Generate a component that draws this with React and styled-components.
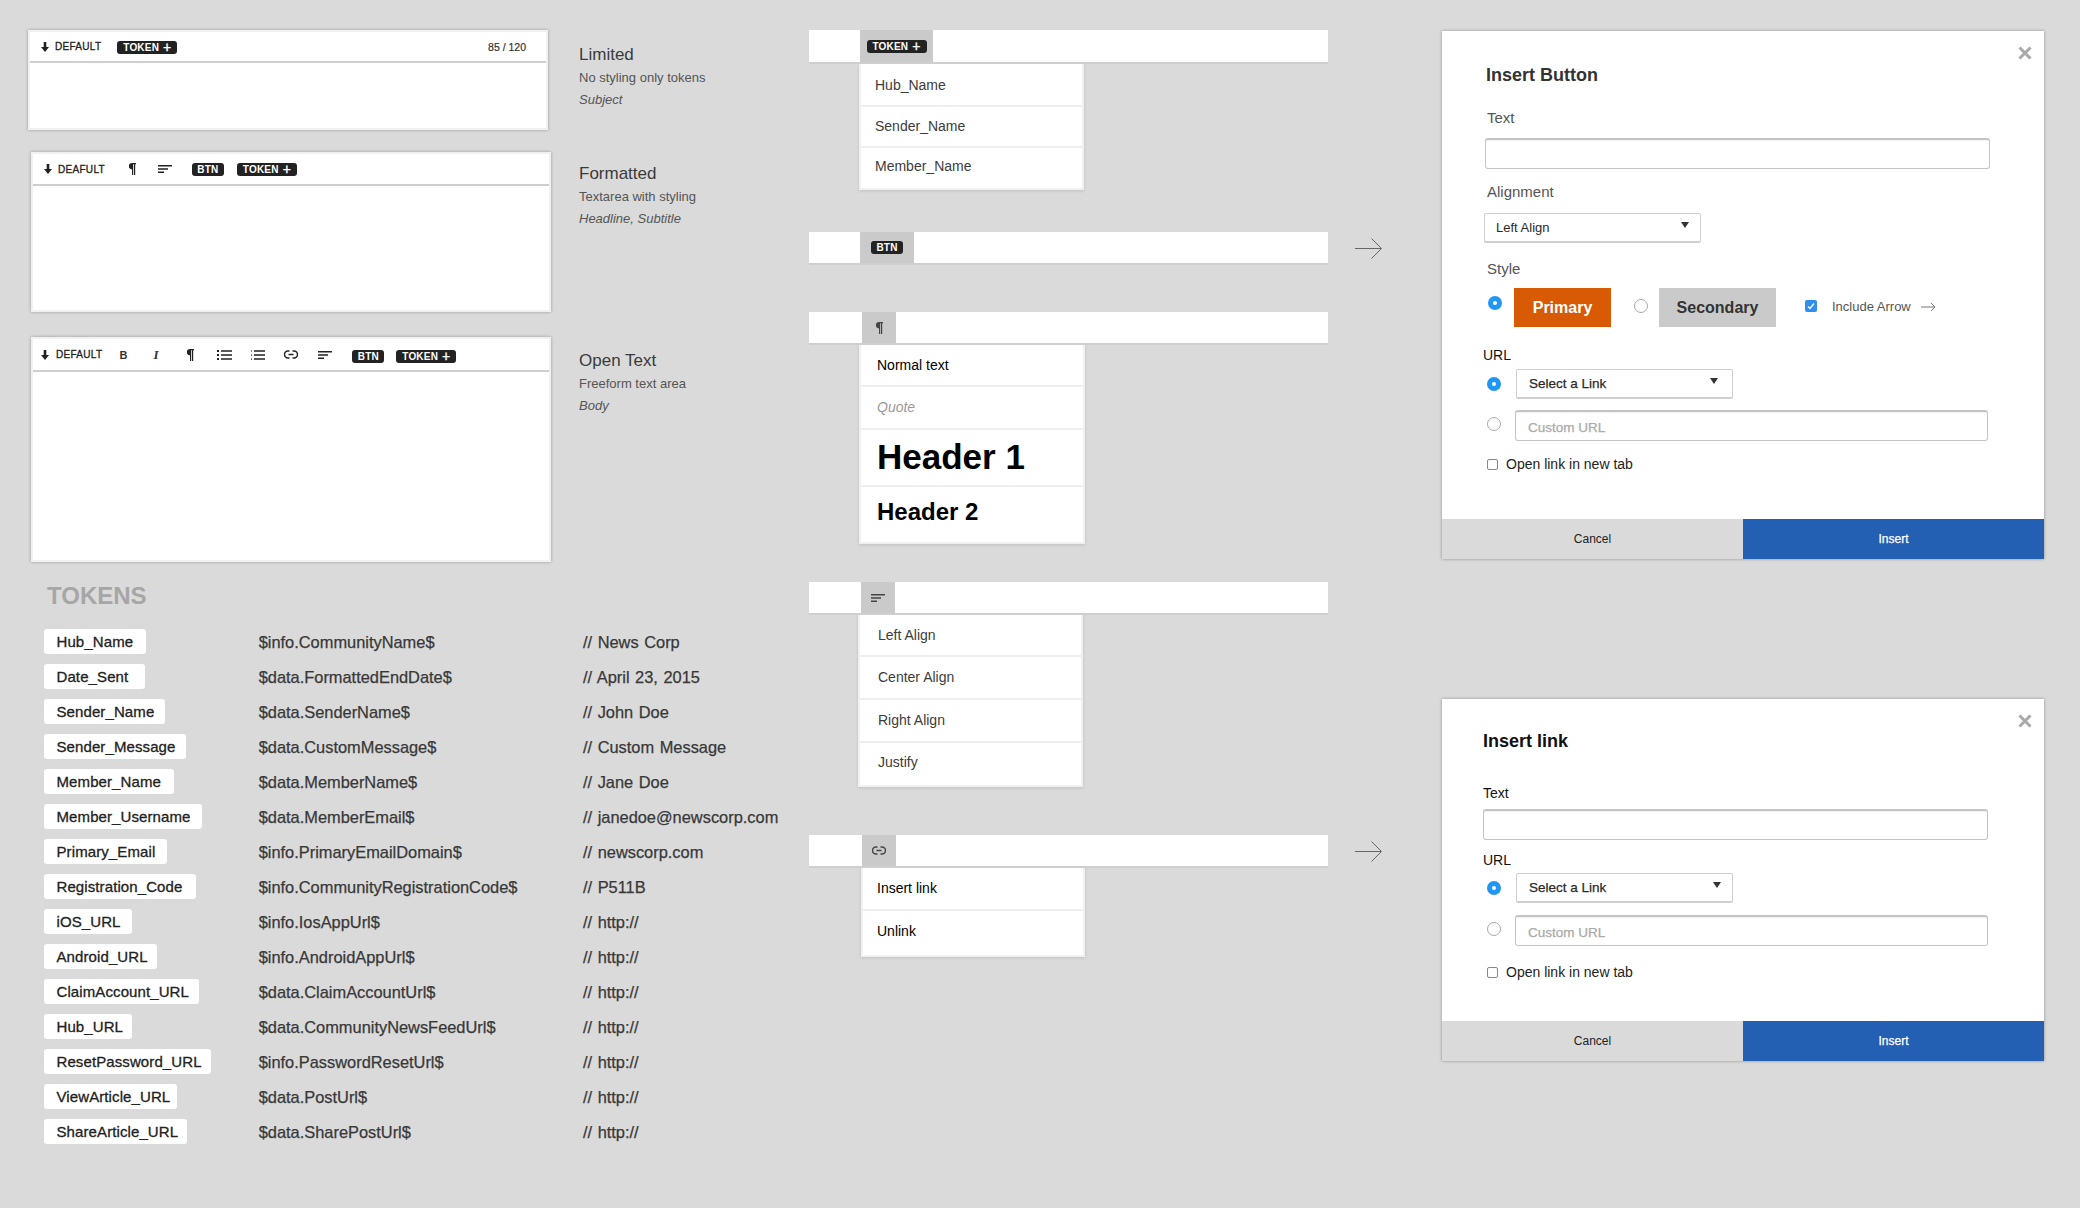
import React from 'react';
import styled, { createGlobalStyle } from 'styled-components';

const Global = createGlobalStyle`
  html, body { margin: 0; padding: 0; background: #dadada; }
  body { font-family: "Liberation Sans", Arial, sans-serif; color: #222; }
  * { box-sizing: border-box; }
`;

const Page = styled.div`
  display: flex;
  width: 2080px;
  height: 1208px;
  overflow: hidden;
  background: #dadada;
`;
const LeftCol = styled.div`
  width: 809px;
  flex: none;
  padding-top: 30px;
`;
const MiddleCol = styled.div`
  width: 633px;
  flex: none;
  padding-top: 30px;
`;
const RightCol = styled.div`
  width: 602px;
  flex: none;
  padding-top: 31px;
`;

/* ---------- Editors ---------- */
const EditorRow = styled.div`
  display: grid;
  grid-template-columns: 579px 1fr;
  margin-top: ${p => p.$mt || 0}px;
`;
const Panel = styled.div`
  margin-left: ${p => p.$ml}px;
  width: 520px;
  height: ${p => p.$h}px;
  background: #fff;
  border: 2px solid #f1f1f1;
  box-shadow: 0 0 3px rgba(0, 0, 0, 0.3);
`;
const Toolbar = styled.div`
  display: flex;
  align-items: center;
  height: ${p => p.$h}px;
  padding-left: ${p => p.$pl}px;
  padding-right: 20px;
  background: #fff;
  border-bottom: 2px solid #cfcfcf;
`;
const Slot = styled.span`
  display: inline-flex;
  align-items: center;
  margin-left: ${p => p.$ml || 0}px;
  margin-top: ${p => p.$mt || 0}px;
  color: #222;
`;
const Style = styled.span`
  font-size: 10px;
  font-weight: 400;
  letter-spacing: 0.3px;
  color: #222;
  margin-left: ${p => p.$ml}px;
  -webkit-text-stroke: 0.3px #222;
`;
const Counter = styled.span`
  margin-left: auto;
  font-size: 10.5px;
  color: #333;
  -webkit-text-stroke: 0.2px #333;
`;
const Pill = styled.span`
  display: inline-flex;
  align-items: center;
  justify-content: center;
  width: ${p => p.$w}px;
  height: 13px;
  border-radius: 3px;
  background: #222;
  color: #fff;
  font-size: 10px;
  font-weight: 700;
  letter-spacing: 0.2px;
`;
const PillPlus = styled.span`
  margin-left: 4px;
  font-size: 14px;
  line-height: 13px;
  font-weight: 400;
  -webkit-text-stroke: 0.4px #fff;
`;
const ToolB = styled.span`
  font-size: 11px;
  font-weight: 700;
  width: 6px;
  color: #333;
`;
const ToolI = styled.span`
  font-family: "Liberation Serif", serif;
  font-style: italic;
  font-size: 13px;
  font-weight: 700;
  width: 6px;
  color: #333;
`;
const Description = styled.div`
  padding-top: ${p => p.$pt}px;
`;
const DescTitle = styled.div`
  font-size: 17px;
  line-height: 20px;
  color: #3a3a3a;
`;
const DescLine = styled.div`
  font-size: 13px;
  line-height: 16px;
  margin-top: ${p => p.$mt || 6}px;
  color: #555;
  font-style: ${p => (p.$italic ? 'italic' : 'normal')};
`;

/* ---------- Tokens ---------- */
const TokensBlock = styled.div`
  padding-left: 44px;
`;
const TokensHeading = styled.h2`
  margin: 20px 0 19px 3px;
  font-size: 24px;
  line-height: 28px;
  font-weight: 700;
  color: #a6a6a6;
`;
const TokenRow = styled.div`
  display: grid;
  grid-template-columns: 214.7px 324.3px 1fr;
  align-items: center;
  height: 35px;
  padding-bottom: 10px;
`;
const TokenName = styled.span`
  display: flex;
  align-items: center;
  width: ${p => p.$w}px;
  height: 25px;
  padding-left: 12.5px;
  background: #fff;
  border-radius: 3px;
  font-size: 15px;
  letter-spacing: 0.1px;
  color: #222;
  -webkit-text-stroke: 0.3px #222;
`;
const TokenCell = styled.span`
  margin-top: 1px;
  font-size: 16.4px;
  white-space: nowrap;
  word-spacing: ${p => p.$ws || 0}px;
  letter-spacing: ${p => p.$ls || 0}px;
  color: #383838;
  -webkit-text-stroke: 0.25px #383838;
`;

/* ---------- Drop-down demos ---------- */
const BarRow = styled.div`
  display: flex;
  align-items: center;
  margin-top: ${p => p.$mt || 0}px;
`;
const Bar = styled.div`
  display: flex;
  width: 519px;
  height: ${p => p.$h}px;
  background: #fff;
  border-bottom: 2px solid #cfcfcf;
`;
const ActiveCell = styled.div`
  display: flex;
  align-items: center;
  justify-content: center;
  margin-left: ${p => p.$ml}px;
  width: ${p => p.$w}px;
  background: #cacaca;
  color: #444;
`;
const ArrowSlot = styled.div`
  margin-left: 27px;
  display: flex;
  color: #666;
`;
const Menu = styled.div`
  margin-left: ${p => p.$ml}px;
  width: ${p => p.$w}px;
  margin-top: ${p => p.$mt || 0}px;
  padding-bottom: 3px;
  background: #fff;
  border: 2px solid #f1f1f1;
  border-top: 0;
  box-shadow: 0 1px 3px rgba(0, 0, 0, 0.12);
`;
const MenuItem = styled.div`
  display: flex;
  align-items: center;
  height: ${p => p.$h}px;
  padding-left: ${p => p.$pl}px;
  padding-top: ${p => p.$pt || 0}px;
  font-size: ${p => p.$size || 14}px;
  font-weight: ${p => (p.$bold ? 700 : 400)};
  font-style: ${p => (p.$italic ? 'italic' : 'normal')};
  color: ${p => p.$color || '#3c3c3c'};
  & + & {
    border-top: 2px solid #eeeeee;
    padding-bottom: 2px;
  }
`;

/* ---------- Modals ---------- */
const Modal = styled.div`
  position: relative;
  display: flex;
  flex-direction: column;
  width: 602px;
  height: ${p => p.$h}px;
  margin-top: ${p => p.$mt || 0}px;
  background: #fff;
  box-shadow: 0 0 3px rgba(0, 0, 0, 0.35);
`;
const CloseBtn = styled.span`
  position: absolute;
  top: ${p => p.$top}px;
  right: 12px;
  display: flex;
  color: #a9a9a9;
`;
const ModalBody = styled.div`
  flex: 1;
  padding-top: ${p => p.$pt}px;
  padding-left: 41px;
`;
const ModalTitle = styled.h3`
  margin: 0 0 0 ${p => p.$ml || 0}px;
  font-size: 18px;
  line-height: 22px;
  font-weight: 700;
  color: ${p => p.$color};
`;
const FieldLabel = styled.div`
  margin-top: ${p => p.$mt}px;
  margin-left: ${p => p.$ml || 0}px;
  font-size: ${p => p.$size || 15}px;
  line-height: 18px;
  color: ${p => p.$color || '#555'};
`;
const TextInput = styled.div`
  display: flex;
  align-items: center;
  margin-top: ${p => p.$mt || 0}px;
  margin-left: ${p => p.$ml || 0}px;
  width: ${p => p.$w}px;
  height: 31px;
  padding-left: 12px;
  padding-top: 3px;
  background: #fff;
  border: 1px solid #c4c4c4;
  border-top-width: 2px;
  border-radius: 3px;
  box-shadow: inset 0 1px 1px rgba(0, 0, 0, 0.06);
  font-size: 13.5px;
  color: #aaa;
  -webkit-text-stroke: 0.25px #aaa;
`;
const SelectBox = styled.div`
  position: relative;
  display: flex;
  align-items: center;
  flex: none;
  margin-top: ${p => p.$mt || 0}px;
  margin-left: ${p => p.$ml || 0}px;
  width: ${p => p.$w}px;
  height: 30px;
  padding-left: ${p => p.$pl}px;
  background: #fff;
  border: 1px solid #cfcfcf;
  border-bottom-width: 2px;
  border-radius: 2px;
  font-size: ${p => (p.$medium ? 13.5 : 13)}px;
  color: #2a2a2a;
  -webkit-text-stroke: ${p => (p.$medium ? '0.25px #2a2a2a' : '0')};
`;
const Caret = styled.span`
  position: absolute;
  right: ${p => p.$right}px;
  top: ${p => p.$top}px;
  width: 0;
  height: 0;
  border-left: 4px solid transparent;
  border-right: 4px solid transparent;
  border-top: 6px solid #333;
`;
const StyleRow = styled.div`
  display: flex;
  align-items: flex-start;
  height: 39px;
  margin-top: 10px;
  margin-left: 5px;
`;
const Radio = styled.span`
  flex: none;
  display: flex;
  align-items: center;
  justify-content: center;
  width: 14px;
  height: 14px;
  margin-top: ${p => p.$mt || 0}px;
  margin-left: ${p => p.$ml || 0}px;
  border-radius: 50%;
  background: ${p => (p.$on ? '#2196f3' : '#fff')};
  border: ${p => (p.$on ? '0' : '1px solid #a8a8a8')};
  &::after {
    content: '';
    display: ${p => (p.$on ? 'block' : 'none')};
    width: 4px;
    height: 4px;
    border-radius: 50%;
    background: #fff;
  }
`;
const StyleButton = styled.span`
  flex: none;
  display: flex;
  align-items: center;
  justify-content: center;
  width: ${p => p.$w}px;
  height: 39px;
  margin-left: ${p => p.$ml}px;
  background: ${p => p.$bg};
  color: ${p => p.$color};
  font-size: 16px;
  font-weight: 700;
`;
const BlueCheck = styled.span`
  flex: none;
  display: flex;
  align-items: center;
  justify-content: center;
  width: 12px;
  height: 12px;
  margin-left: 29px;
  margin-top: 12px;
  border-radius: 2px;
  background: #2f8fec;
  color: #fff;
`;
const InlineNote = styled.span`
  margin-left: 15px;
  margin-top: 11px;
  font-size: 13px;
  line-height: 16px;
  color: #555;
`;
const SmallArrow = styled.span`
  display: flex;
  margin-left: 10px;
  margin-top: 14px;
  color: #777;
`;
const UrlRow = styled.div`
  display: flex;
  align-items: center;
  margin-top: ${p => p.$mt}px;
  padding-left: 4px;
`;
const CheckRow = styled.div`
  display: flex;
  align-items: center;
  height: 18px;
  margin-top: ${p => p.$mt}px;
  margin-left: 4px;
  font-size: 14px;
  color: #222;
`;
const EmptyCheck = styled.span`
  width: 11px;
  height: 11px;
  margin-right: 8px;
  border: 1px solid #888;
  border-radius: 2px;
  background: #fff;
`;
const Footer = styled.div`
  display: flex;
  height: 40px;
`;
const FooterBtn = styled.span`
  display: flex;
  flex: 1;
  align-items: center;
  justify-content: center;
  font-size: 12px;
  background: ${p => p.$bg};
  color: ${p => p.$color};
  -webkit-text-stroke: ${p => (p.$primary ? '0.25px #fff' : '0')};
`;

/* ---------- Icons ---------- */
const DownArrow = () => (
  <svg width="8" height="10" viewBox="0 0 8 10" fill="currentColor"><path d="M2.7 0h2.6v5H8L4 10 0 5h2.7z" /></svg>
);
const Pilcrow = () => (
  <svg width="7" height="12" viewBox="0 0 7 12" fill="currentColor"><path d="M3 0h4v1.2H6.2V12H5V1.2H4.2V12H3V6.4A3.2 3.2 0 0 1 3 0z" /></svg>
);
const AlignIcon = () => (
  <svg width="14" height="8" viewBox="0 0 14 8" fill="currentColor"><path d="M0 0h14v1.6H0zM0 3.2h10v1.6H0zM0 6.4h6V8H0z" /></svg>
);
const BulletList = () => (
  <svg width="15" height="10" viewBox="0 0 15 10" fill="currentColor"><path d="M0 0h2v2H0zM0 4h2v2H0zM0 8h2v2H0zM4 .2h11v1.6H4zM4 4.2h11v1.6H4zM4 8.2h11v1.6H4z" /></svg>
);
const NumberList = () => (
  <svg width="14" height="10" viewBox="0 0 14 10" fill="currentColor"><path d="M0 0h1v.6H0zM0 1.2h1v.6H0zM0 4h1v.6H0zM0 5.3h1v.6H0zM0 8h1v.6H0zM0 9.3h1v.6H0zM3 .2h11v1.6H3zM3 4.2h11v1.6H3zM3 8.2h11v1.6H3z" /></svg>
);
const LinkIcon = () => (
  <svg width="14" height="9" viewBox="0 0 14 9" fill="none" stroke="currentColor" strokeWidth="1.5">
    <path d="M5.5 1H4a3.5 3.5 0 0 0 0 7h1.5M8.5 1H10a3.500 3.500 0 0 1 0 7H8.500M4.500 4.500h5" />
  </svg>
);
const LongArrow = () => (
  <svg width="27" height="21" viewBox="0 0 27 21" fill="none" stroke="currentColor" strokeWidth="1"><path d="M0 10.500h26M16.500 .5l10 10-10 10" /></svg>
);
const ThinArrow = () => (
  <svg width="15" height="10" viewBox="0 0 15 10" fill="none" stroke="currentColor" strokeWidth="1"><path d="M0 5h14M10 1l4 4-4 4" /></svg>
);
const CloseIcon = () => (
  <svg width="14" height="14" viewBox="0 0 14 14" fill="none" stroke="currentColor" strokeWidth="3"><path d="M1.500 1.500l11 11M12.500 1.500l-11 11" /></svg>
);
const CheckMark = () => (
  <svg width="8" height="8" viewBox="0 0 8 8" fill="none" stroke="currentColor" strokeWidth="1.300"><path d="M1 4.500l2 2 4-5" /></svg>
);

const TokenBadge = () => <Pill $w={60}>TOKEN<PillPlus>+</PillPlus></Pill>;
const BtnBadge = () => <Pill $w={32}>BTN</Pill>;

const tokens = [
  ['Hub_Name', 102, '$info.CommunityName$', '// News Corp'],
  ['Date_Sent', 101, '$data.FormattedEndDate$', '// April 23, 2015'],
  ['Sender_Name', 121, '$data.SenderName$', '// John Doe'],
  ['Sender_Message', 142, '$data.CustomMessage$', '// Custom Message'],
  ['Member_Name', 130, '$data.MemberName$', '// Jane Doe'],
  ['Member_Username', 158, '$data.MemberEmail$', '// janedoe@newscorp.com'],
  ['Primary_Email', 123, '$info.PrimaryEmailDomain$', '// newscorp.com'],
  ['Registration_Code', 152, '$info.CommunityRegistrationCode$', '// P511B'],
  ['iOS_URL', 88, '$info.IosAppUrl$', '// http://'],
  ['Android_URL', 113, '$info.AndroidAppUrl$', '// http://'],
  ['ClaimAccount_URL', 155, '$data.ClaimAccountUrl$', '// http://'],
  ['Hub_URL', 88, '$data.CommunityNewsFeedUrl$', '// http://'],
  ['ResetPassword_URL', 167, '$info.PasswordResetUrl$', '// http://'],
  ['ViewArticle_URL', 133, '$data.PostUrl$', '// http://'],
  ['ShareArticle_URL', 143, '$data.SharePostUrl$', '// http://'],
];

const UrlFields = ({ firstMt, caretRight, caretTop, secondMt, checkMt }) => (
  <>
    <UrlRow $mt={firstMt}>
      <Radio $on />
      <SelectBox $ml={15} $w={217} $pl={12} $medium>
        Select a Link
        <Caret $right={caretRight} $top={caretTop} />
      </SelectBox>
    </UrlRow>
    <UrlRow $mt={secondMt}>
      <Radio $mt={-3} />
      <TextInput $ml={14} $w={473}>Custom URL</TextInput>
    </UrlRow>
    <CheckRow $mt={checkMt}>
      <EmptyCheck />
      Open link in new tab
    </CheckRow>
  </>
);

export default function App() {
  return (
    <Page>
      <Global />
      <LeftCol>
        <EditorRow>
          <Panel $ml={28} $h={100}>
            <Toolbar $h={31} $pl={11}>
              <Slot><DownArrow /></Slot>
              <Style $ml={6}>DEFAULT</Style>
              <Slot $ml={16} $mt={1}><TokenBadge /></Slot>
              <Counter>85 / 120</Counter>
            </Toolbar>
          </Panel>
          <Description $pt={15}>
            <DescTitle>Limited</DescTitle>
            <DescLine $mt={5}>No styling only tokens</DescLine>
            <DescLine $mt={6} $italic>Subject</DescLine>
          </Description>
        </EditorRow>
        <EditorRow $mt={22}>
          <Panel $ml={31} $h={160}>
            <Toolbar $h={32} $pl={11}>
              <Slot><DownArrow /></Slot>
              <Style $ml={6}>DEAFULT</Style>
              <Slot $ml={24}><Pilcrow /></Slot>
              <Slot $ml={22}><AlignIcon /></Slot>
              <Slot $ml={20} $mt={1}><BtnBadge /></Slot>
              <Slot $ml={13} $mt={1}><TokenBadge /></Slot>
            </Toolbar>
          </Panel>
          <Description $pt={12}>
            <DescTitle>Formatted</DescTitle>
            <DescLine $mt={5}>Textarea with styling</DescLine>
            <DescLine $mt={6} $italic>Headline, Subtitle</DescLine>
          </Description>
        </EditorRow>
        <EditorRow $mt={25}>
          <Panel $ml={31} $h={225}>
            <Toolbar $h={33} $pl={8}>
              <Slot><DownArrow /></Slot>
              <Style $ml={7}>DEFAULT</Style>
              <Slot $ml={17}><ToolB>B</ToolB></Slot>
              <Slot $ml={28}><ToolI>I</ToolI></Slot>
              <Slot $ml={28}><Pilcrow /></Slot>
              <Slot $ml={23}><BulletList /></Slot>
              <Slot $ml={19}><NumberList /></Slot>
              <Slot $ml={19}><LinkIcon /></Slot>
              <Slot $ml={20}><AlignIcon /></Slot>
              <Slot $ml={20} $mt={3}><BtnBadge /></Slot>
              <Slot $ml={12} $mt={3}><TokenBadge /></Slot>
            </Toolbar>
          </Panel>
          <Description $pt={14}>
            <DescTitle>Open Text</DescTitle>
            <DescLine $mt={5}>Freeform text area</DescLine>
            <DescLine $mt={6} $italic>Body</DescLine>
          </Description>
        </EditorRow>
        <TokensBlock>
          <TokensHeading>TOKENS</TokensHeading>
          {tokens.map(([name, w, value, example]) => (
            <TokenRow key={name}>
              <TokenName $w={w}>{name}</TokenName>
              <TokenCell>{value}</TokenCell>
              <TokenCell $ws={1}>{example}</TokenCell>
            </TokenRow>
          ))}
        </TokensBlock>
      </LeftCol>

      <MiddleCol>
        <BarRow>
          <Bar $h={34}>
            <ActiveCell $ml={51} $w={73}><TokenBadge /></ActiveCell>
          </Bar>
        </BarRow>
        <Menu $ml={50} $w={225}>
          <MenuItem $h={41} $pl={14}>Hub_Name</MenuItem>
          <MenuItem $h={41} $pl={14}>Sender_Name</MenuItem>
          <MenuItem $h={39} $pl={14}>Member_Name</MenuItem>
        </Menu>

        <BarRow $mt={42}>
          <Bar $h={33}>
            <ActiveCell $ml={51} $w={54}><BtnBadge /></ActiveCell>
          </Bar>
          <ArrowSlot><LongArrow /></ArrowSlot>
        </BarRow>

        <BarRow $mt={47}>
          <Bar $h={33}>
            <ActiveCell $ml={53} $w={34}><Pilcrow /></ActiveCell>
          </Bar>
        </BarRow>
        <Menu $ml={50} $w={226} $mt={-1}>
          <MenuItem $h={41} $pl={16} $color="#000">Normal text</MenuItem>
          <MenuItem $h={43} $pl={16} $italic $color="#999">Quote</MenuItem>
          <MenuItem $h={57} $pl={16} $size={35} $bold $color="#000">Header 1</MenuItem>
          <MenuItem $h={54} $pl={16} $size={24} $bold $color="#000">Header 2</MenuItem>
        </Menu>

        <BarRow $mt={38}>
          <Bar $h={33}>
            <ActiveCell $ml={52} $w={34}><AlignIcon /></ActiveCell>
          </Bar>
        </BarRow>
        <Menu $ml={49} $w={225} $mt={-2}>
          <MenuItem $h={42} $pl={18} $pt={2}>Left Align</MenuItem>
          <MenuItem $h={43} $pl={18}>Center Align</MenuItem>
          <MenuItem $h={43} $pl={18}>Right Align</MenuItem>
          <MenuItem $h={41} $pl={18}>Justify</MenuItem>
        </Menu>

        <BarRow $mt={48}>
          <Bar $h={33}>
            <ActiveCell $ml={53} $w={34}><LinkIcon /></ActiveCell>
          </Bar>
          <ArrowSlot><LongArrow /></ArrowSlot>
        </BarRow>
        <Menu $ml={52} $w={224} $mt={-1}>
          <MenuItem $h={42} $pl={14} $color="#000">Insert link</MenuItem>
          <MenuItem $h={43} $pl={14} $color="#000">Unlink</MenuItem>
        </Menu>
      </MiddleCol>

      <RightCol>
        <Modal $h={528}>
          <CloseBtn $top={15}><CloseIcon /></CloseBtn>
          <ModalBody $pt={33}>
            <ModalTitle $ml={3} $color="#333">Insert Button</ModalTitle>
            <FieldLabel $mt={23} $ml={4}>Text</FieldLabel>
            <TextInput $mt={11} $ml={2} $w={505} />
            <FieldLabel $mt={14} $ml={4}>Alignment</FieldLabel>
            <SelectBox $mt={12} $ml={1} $w={217} $pl={11}>
              Left Align
              <Caret $right={11} $top={8} />
            </SelectBox>
            <FieldLabel $mt={17} $ml={4}>Style</FieldLabel>
            <StyleRow>
              <Radio $on $mt={8} />
              <StyleButton $ml={12} $w={97} $bg="#d85a05" $color="#fff">Primary</StyleButton>
              <Radio $ml={23} $mt={11} />
              <StyleButton $ml={11} $w={117} $bg="#cacaca" $color="#333">Secondary</StyleButton>
              <BlueCheck><CheckMark /></BlueCheck>
              <InlineNote>Include Arrow</InlineNote>
              <SmallArrow><ThinArrow /></SmallArrow>
            </StyleRow>
            <FieldLabel $mt={19} $size={14} $color="#111">URL</FieldLabel>
            <UrlFields firstMt={5} caretRight={14} caretTop={8} secondMt={11} checkMt={14} />
          </ModalBody>
          <Footer>
            <FooterBtn $bg="#dadada" $color="#222">Cancel</FooterBtn>
            <FooterBtn $bg="#2360b3" $color="#fff" $primary>Insert</FooterBtn>
          </Footer>
        </Modal>

        <Modal $h={362} $mt={140}>
          <CloseBtn $top={15}><CloseIcon /></CloseBtn>
          <ModalBody $pt={31}>
            <ModalTitle $color="#111">Insert link</ModalTitle>
            <FieldLabel $mt={32} $size={14} $color="#111">Text</FieldLabel>
            <TextInput $mt={7} $w={505} />
            <FieldLabel $mt={11} $size={14} $color="#111">URL</FieldLabel>
            <UrlFields firstMt={4} caretRight={11} caretTop={8} secondMt={12} checkMt={17} />
          </ModalBody>
          <Footer>
            <FooterBtn $bg="#dadada" $color="#222">Cancel</FooterBtn>
            <FooterBtn $bg="#2360b3" $color="#fff" $primary>Insert</FooterBtn>
          </Footer>
        </Modal>
      </RightCol>
    </Page>
  );
}
